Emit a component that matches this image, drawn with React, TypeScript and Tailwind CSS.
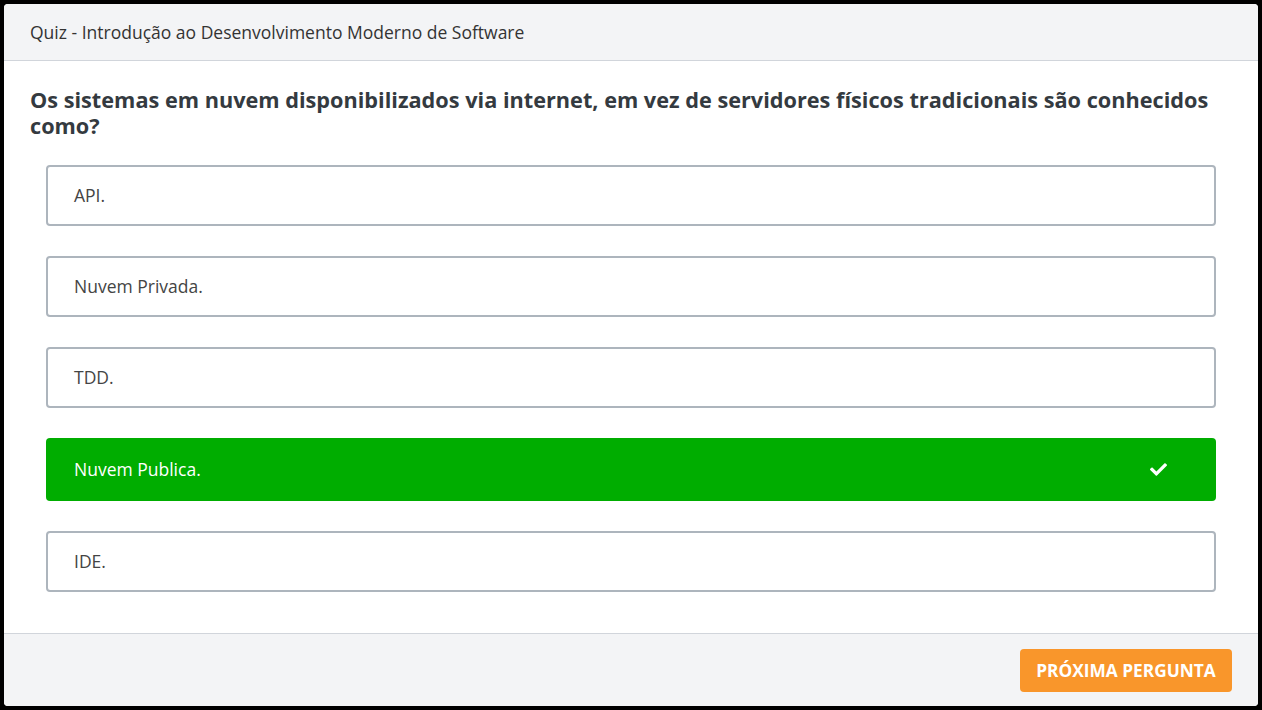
import { FaCheck } from "react-icons/fa";

const options = [
  { text: "API.", correct: false },
  { text: "Nuvem Privada.", correct: false },
  { text: "TDD.", correct: false },
  { text: "Nuvem Publica.", correct: true },
  { text: "IDE.", correct: false },
];

export default function App() {
  return (
    <div
      className="h-screen bg-black p-1"
      style={{ fontFamily: '"Open Sans", sans-serif' }}
    >
      <div className="flex h-full flex-col overflow-hidden rounded bg-white">
        <header className="border-b border-[#d1d5db] bg-[#f3f4f6] px-[26px] py-[15px] text-[17.5px] leading-[26px] text-[#333]">
          Quiz - Introdução ao Desenvolvimento Moderno de Software
        </header>

        <main className="flex-1 px-[26px] pt-[26px]">
          <h1 className="text-[21.7px] font-bold leading-[26px] text-[#343a40]">
            Os sistemas em nuvem disponibilizados via internet, em vez de
            servidores físicos tradicionais são conhecidos como?
          </h1>
          <div className="mx-4 mt-[26px] flex flex-col gap-[30px]">
            {options.map((o) =>
              o.correct ? (
                <div
                  key={o.text}
                  className="flex h-[63px] items-center justify-between rounded bg-[#00ad00] pl-7 pr-[49px] text-[17.5px] text-white"
                >
                  <span>{o.text}</span>
                  <FaCheck className="text-[17px]" />
                </div>
              ) : (
                <div
                  key={o.text}
                  className="flex h-[61px] items-center rounded border-2 border-[#adb5bd] pl-[26px] text-[17.5px] text-[#444]"
                >
                  {o.text}
                </div>
              )
            )}
          </div>
        </main>

        <footer className="flex h-[73px] justify-end border-t border-[#d1d5db] bg-[#f3f4f6] pr-[26px] pt-[15px]">
          <button className="h-[43px] w-[212px] rounded bg-[#f9962b] text-[17.3px] font-bold uppercase text-white">
            Próxima pergunta
          </button>
        </footer>
      </div>
    </div>
  );
}
